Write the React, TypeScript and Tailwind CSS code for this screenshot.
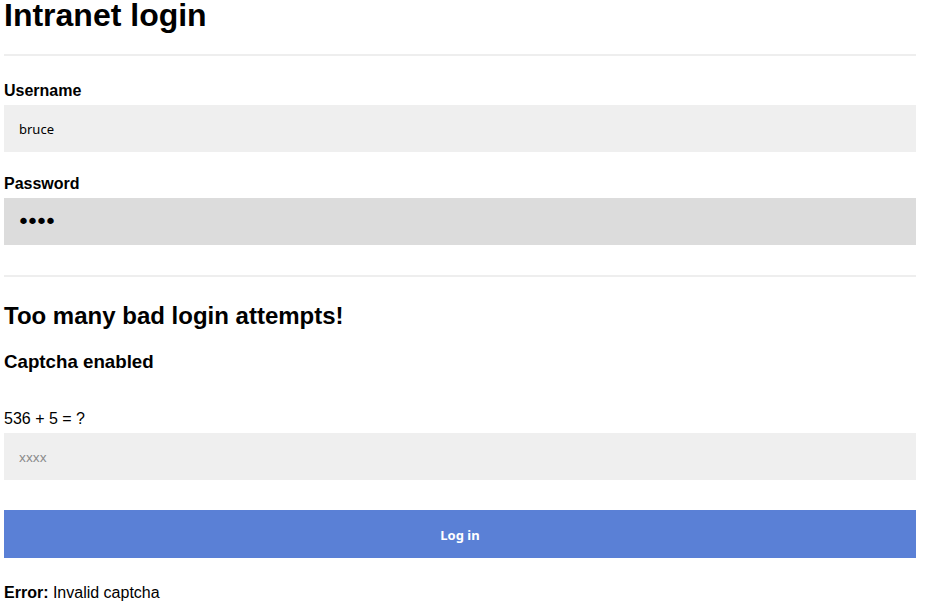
import React, { useState } from 'react';

const Label: React.FC<{ children: React.ReactNode }> = ({ children }) => (
  <label className="block text-base font-bold leading-[18px] text-black mb-[5px]">{children}</label>
);

export default function App() {
  const [username, setUsername] = useState('bruce');
  const [password, setPassword] = useState('abcd');
  const [captcha, setCaptcha] = useState('');

  return (
    <div className="min-h-[612px] bg-white pl-1 pr-[10px] font-['Liberation_Sans',Arial,sans-serif] text-black">
      <h1 className="mt-[-3px] text-[32px] font-bold leading-[37px]">Intranet login</h1>
      <hr className="mt-[20px] border-t-2 border-[#eeeeee]" />

      <form onSubmit={(e) => e.preventDefault()}>
        <div className="mt-[26px]">
          <Label>Username</Label>
          <input
            value={username}
            onChange={(e) => setUsername(e.target.value)}
            className="block h-[47px] w-full bg-[#efefef] px-[15px] font-['Noto_Sans',sans-serif] text-[13px] text-black outline-none"
          />
        </div>
        <div className="mt-[23px]">
          <Label>Password</Label>
          <input
            type="password"
            autoFocus
            value={password}
            onChange={(e) => setPassword(e.target.value)}
            className="block h-[47px] w-full bg-[#dcdcdc] pl-[13px] pr-[15px] font-['DejaVu_Sans',sans-serif] text-[22px] tracking-[-4px] text-black caret-black outline-none"
          />
        </div>

        <hr className="mt-[30px] border-t-2 border-[#eeeeee]" />

        <h2 className="mt-[25px] text-2xl font-bold leading-[28px]">Too many bad login attempts!</h2>
        <h3 className="mt-[21px] text-[18.72px] font-bold leading-[21px]">Captcha enabled</h3>

        <p className="mt-[38px] text-base leading-[18px]">536 + 5 = ?</p>
        <input
          value={captcha}
          placeholder="xxxx"
          onChange={(e) => setCaptcha(e.target.value)}
          className="mt-[5px] block h-[47px] w-full bg-[#efefef] px-[15px] font-['Noto_Sans',sans-serif] text-[13px] text-black outline-none placeholder:text-[#8a8a8a]"
        />

        <button
          type="submit"
          className="mt-[30px] block h-[48px] w-full bg-[#5a80d6] pt-1 font-['Noto_Sans',sans-serif] text-[13px] font-bold text-white"
        >
          Log in
        </button>
      </form>

      <p className="mt-[26px] text-base leading-[18px]">
        <strong>Error:</strong> Invalid captcha
      </p>
    </div>
  );
}
